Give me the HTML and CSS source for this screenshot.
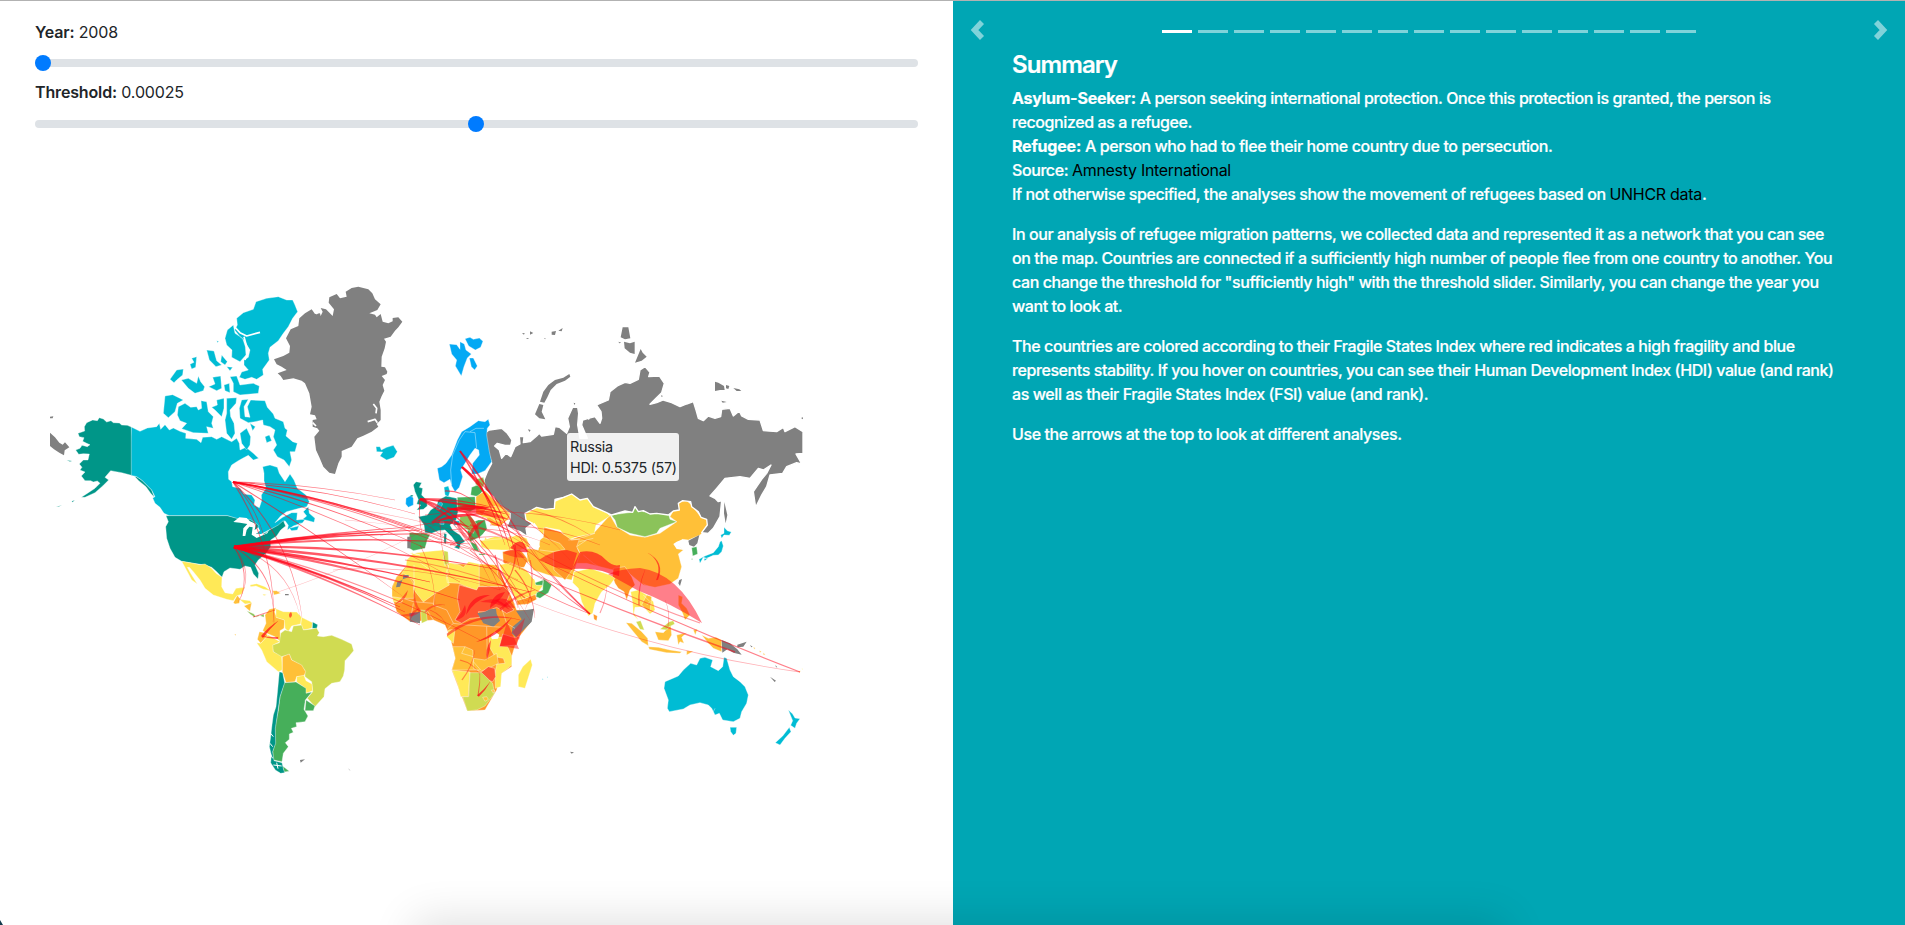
FILE: index.html
```html
<!DOCTYPE html>
<html lang="en">
<head>
<meta charset="utf-8">
<title>Refugee migration</title>
<link rel="stylesheet" href="styles.css">
</head>
<body>
<div class="page">
<section class="left">
  <div class="controls">
    <div class="label"><b>Year:</b> 2008</div>
    <div class="range"><i class="thumb first"></i></div>
    <div class="label second"><b>Threshold:</b> 0.00025</div>
    <div class="range"><i class="thumb"></i></div>
  </div>
  <svg class="map" viewBox="0 145 953 780">
    <!-- northern America -->
    <g transform="translate(40 270) scale(.33333)">
      <path class="n" d="M30 488L45 502L58 518L68 524L75 517L88 532L74 541L72 556L58 548L42 538L30 528ZM30 440L40 439L38 445L30 445Z"/>
      <path class="t" d="M274 471L262 466L245 465L238 459L220 458L213 452L200 456L190 447L178 443L172 452L158 450L140 458L133 470L134 483L114 490L118 500L132 503L128 514L140 520L150 524L142 530L126 526L120 535L107 540L116 553L130 551L148 552L144 570L130 570L118 582L126 592L120 600L135 606L124 618L135 632L152 632L160 636L172 633L180 640L165 655L145 668L124 682L135 682L165 668L188 648L206 630L195 622L212 602L228 605L245 608L274 616L290 620L305 630L320 645L335 660L343 682L332 670L318 650L296 632L285 620ZM80 570L96 573L90 575ZM95 694L105 690L98 697ZM48 710L66 706L56 710Z"/>
      <path class="c" d="M274 471L300 484L322 474L350 470L358 460L362 478L375 464L388 480L400 474L420 484L438 490L437 505L470 508L483 518L488 502L515 500L530 508L545 500L560 508L575 515L590 505L598 520L600 540L618 532L640 550L656 565L640 570L625 556L608 565L595 572L575 585L565 605L566 628L575 635L578 650L600 655L612 672L635 675L645 690L642 705L658 713L665 692L664 675L678 655L672 632L672 610L668 590L690 585L712 592L718 610L735 635L750 612L762 630L772 655L798 675L808 695L800 710L778 715L740 725L722 738L705 758L728 742L755 728L772 728L770 750L790 748L800 742L788 758L760 768L742 780L745 766L735 752L715 768L687 780L668 790L655 798L645 780L640 764L620 760L590 746L562 737H388L372 730L360 712L345 700L338 684L345 680L335 660L320 645L305 630L290 620L274 616Z"/>
      <path class="c" d="M590 145L610 128L640 118L648 95L680 85L715 80L740 90L758 90L765 105L773 125L758 145L745 170L730 190L715 212L690 232L685 250L688 270L668 298L670 315L650 328L635 322L615 328L598 322L605 306L625 300L612 285L612 270L625 262L630 240L612 210L600 200L584 180L592 165ZM580 165L585 190L608 205L616 230L618 255L600 275L575 262L576 240L560 225L555 205L562 180ZM580 340L570 320L590 318L600 345L640 340L658 348L655 370L600 375L580 365ZM500 240L522 243L530 272L545 285L528 290L508 270ZM545 255L562 275L555 285L542 275ZM455 265L470 260L467 292L455 297L450 283L462 277ZM390 328L410 300L430 297L428 315L410 330L402 338ZM424 330L445 325L470 340L475 318L482 335L494 350L490 362L465 370L445 355ZM518 322L542 318L545 355L530 362L506 350L525 342ZM552 345L568 340L570 368L555 362ZM560 290L578 292L570 302ZM530 212L536 214L533 218Z"/>
      <path class="c" d="M375 378L398 374L430 390L412 400L405 425L385 443L370 430ZM415 410L435 400L452 412L470 410L475 420L485 415L483 392L500 395L505 425L520 440L515 460L520 475L500 470L505 490L460 488L425 476L440 460L420 452L412 435ZM530 390L552 385L552 415L545 440L525 420L515 412L532 405ZM560 385L590 383L588 400L570 420L572 440L582 460L585 490L575 508L560 490L555 450L560 430ZM605 390L625 388L612 410L615 440L630 442L622 410L632 390L675 392L682 412L700 432L705 445L730 455L735 475L742 480L738 498L758 515L772 520L765 545L750 545L755 570L748 590L732 570L712 560L700 540L710 525L700 500L705 480L690 470L670 465L668 450L645 455L625 458L600 445L598 415ZM600 490L620 475L632 500L630 525L620 540L605 520ZM675 500L688 495L695 512L680 518ZM630 460L646 470L638 482Z"/>
      <path class="fjord" d="M583 170L600 188L620 198L660 187M612 200L620 230L626 240L615 270"/>
    </g>
    <!-- Greenland, Iceland and Svalbard -->
    <g transform="translate(260 270) scale(.33333)">
      <path class="n" d="M257 65L275 54L295 50L325 58L337 70L345 88L362 103L352 120L328 130L345 134L350 142L362 132L368 155L385 160L398 154L398 144L415 142L427 155L415 172L405 182L392 200L372 206L378 215L374 235L365 260L364 290L375 292L382 305L380 312L365 318L375 330L368 345L373 362L365 378L358 395L362 420L362 450L350 462L355 470L335 485L310 497L292 505L275 530L245 543L245 560L235 580L225 612L208 608L190 590L178 562L168 540L163 500L178 482L172 475L158 470L158 450L170 448L165 436L150 433L155 410L148 370L135 340L125 332L100 325L70 330L62 318L53 310L80 300L65 290L50 283L42 268L70 258L88 248L90 228L78 205L92 178L115 168L118 145L135 130L155 118L165 132L180 130L182 138L188 125L182 114L198 118L218 138L222 118L206 98L208 82L230 72L240 85L260 80Z"/>
      <path class="fjord" d="M323 455L345 448L352 458M340 402L350 415L348 430M158 458L168 468M200 100L218 122M165 125L172 132"/>
      <path class="c" d="M348 530L360 530L364 540L380 532L400 526L412 545L402 562L380 570L360 558L368 546L350 545Z"/>
      <path class="b" d="M568 222L590 224L600 238V215L613 222L618 240L634 252L622 264L612 290L604 318L598 308L586 288L590 270L575 252ZM615 206L630 202L640 208L658 204L669 214L662 232L646 240L626 228ZM628 264L640 264L652 288L644 300L634 290Z"/>
    </g>
    <!-- central and southern America -->
    <g transform="translate(150 480) scale(.33333)">
      <path class="t" d="M48 107H232L256 114L282 120L300 118L325 135L322 160L335 165L358 150L385 135L400 122L407 138L392 150L380 168L362 180L362 200L350 218L325 240L315 255L326 280L324 297L310 282L302 262L285 258L270 268L240 264L222 275L216 292L200 275L185 262L165 255L130 250L95 244L75 232L60 205L50 175L47 140L55 125Z"/>
      <path class="water" d="M250 126L268 112L290 114L300 124L318 132L314 150L325 142L330 152L318 162L345 162L357 150L352 160L320 174L305 164L308 142L298 140L290 150L286 168L278 168L280 145L292 132L270 128Z"/>
      <path class="c" d="M418 145L445 138L450 128L442 150L425 152ZM460 95L475 80L478 100L495 115L492 127L475 122L458 118L470 108Z"/>
      <path class="y" d="M95 244L130 250L150 254L165 252L185 265L198 280L216 292L215 320L225 338L248 342L258 325L284 322L276 342L260 348L250 362L230 358L190 345L165 325L150 300L130 275L118 262L112 262L122 280L142 312L125 300L112 275ZM268 358L300 362L306 370L285 372ZM300 315L320 311L345 320L362 332L340 328L318 318L302 320ZM338 342L350 344L342 347ZM336 300L340 308Z"/>
      <path class="a" d="M250 368L262 346L270 356L268 370L255 372ZM282 378L305 368L300 394ZM368 332L380 332L392 340L372 345ZM254 462L258 462L256 468Z"/>
      <path class="s" d="M290 392L312 402L318 412L342 402L342 412L325 406L314 412L300 402Z"/>
      <path class="n" d="M405 342H416V346H405ZM450 840L465 838L452 848ZM594 865L602 872L598 870Z"/>
      <path class="a" d="M345 405L358 388L378 383L374 396L380 412L405 420L402 445L390 452L392 485L375 470L350 460L338 452L348 430ZM328 455L345 458L354 466L332 490L322 478Z"/>
      <path class="y" d="M378 386L400 395L440 396L455 412L452 432L425 438L415 455L405 445L403 420L378 412ZM455 412L488 428L485 445L460 450L452 432ZM320 488L332 490L355 465L390 485L370 495L370 515L395 525L397 570L385 575L350 545L335 510Z"/>
      <path class="t" d="M488 426L503 434L500 446L487 445Z"/>
      <path class="l" d="M392 460L405 450L425 455L430 438L455 435L460 450L485 447L500 444L508 458L502 468L520 470L545 466L575 478L605 492L611 512L598 528L585 542L584 570L580 588L570 605L545 610L525 626L522 650L495 680L472 655L488 635L485 605L465 590L464 570L445 552L425 540L418 524L395 530L370 515L368 495L388 488Z"/>
      <path class="a" d="M397 530L418 522L425 540L455 555L467 575L462 588L440 590L435 605L408 608L397 575Z"/>
      <path class="y" d="M440 590L462 586L468 602L486 612L488 632L468 640L460 620L440 606Z"/>
      <path class="g" d="M403 608L438 606L468 625L468 640L486 636L466 660L462 688L474 708L465 725L438 728L440 740L424 745L430 757L418 762L418 778L406 788L415 800L400 820L396 845L370 840L368 815L375 790L375 740L385 690L390 650ZM468 660L495 678L490 692L465 692ZM398 858L418 874L402 876Z"/>
      <path class="t" d="M388 575L398 578L404 608L390 650L383 700L376 745L377 790L368 815L372 842L396 848L400 866L404 878L392 880L376 870L362 848L364 825L358 800L362 770L366 735L370 705L378 680L382 640Z"/>
      <path class="fjord thin" d="M362 760L370 770M360 790L368 800M360 820L368 835M370 855L395 858M380 848L384 866"/>
    </g>
    <!-- Africa and Arabia -->
    <g transform="translate(370 530) scale(.33333)">
      <path class="o" d="M68 205L66 170L80 140L105 112L140 90L220 60L238 100L328 105H380L420 190L440 240L490 240L480 280L440 330L425 380V410L395 430L380 480L345 540L292 543L245 420L256 385L240 320L225 285L190 270L120 275L80 245Z"/>
      <path class="y" d="M108 112L110 90L130 70L165 65L222 60L220 85L236 108L232 140L238 165L198 188L160 216L132 180V155L120 140H100L95 130ZM238 98L268 105L280 112L296 95L328 102V170L320 182L265 160L232 158L228 130ZM68 200L100 205L95 218L70 215ZM150 75L128 68L118 70ZM246 420L300 426L298 455L295 500H272L262 460ZM358 320L395 322L415 355L425 378L425 405L395 430L392 470L376 475L375 430L380 402L405 400L400 385L375 380L358 350ZM236 300L255 298L250 340L230 320ZM482 388L487 405L465 475L445 470L445 435L458 410Z"/>
      <path class="a" d="M328 102L370 104L385 115L382 132L402 170H328ZM80 140L100 130L118 140L130 160L132 205L100 205L66 200L66 172ZM248 350H285L308 360L310 395L332 420H246L256 385ZM310 385L345 390L380 370L385 400L355 415L330 425L310 415Z"/>
      <path class="r" d="M268 165L320 180L325 170H402L420 190L410 215L432 240L410 250L380 232L345 245L325 245L330 262L300 265L275 280L255 270L270 245L262 205ZM332 428L355 410L374 415L377 440L368 455L350 450ZM388 350L398 312L430 322L448 320L440 345Z"/>
      <path class="l" d="M222 62L234 65L236 100L224 106L220 85ZM152 240L168 242L172 272L155 280ZM300 428L335 428L368 460L374 490L345 528L320 540L292 543L278 500H296Z"/>
      <path class="n" d="M78 172L82 155L98 150L100 135H116V142L98 148L90 170ZM118 250L150 245V280L120 275ZM322 250L345 245L360 238L378 236L380 252L390 272L370 290L340 280ZM438 242L470 240L492 236L485 275L460 300L438 322L425 310L428 290L455 268Z"/>
      <path class="a" d="M338 502L350 500L355 508L345 514ZM364 480L374 480L370 490Z"/>
      <path class="c" d="M516 446L520 447L518 450ZM531 440L534 441L532 444Z"/>
      <path class="o" d="M440 210L465 205L496 190L500 208L475 222L442 225ZM398 65L445 55L460 70L475 90L470 110L430 118L400 98Z"/>
      <path class="y" d="M388 105L420 98L460 115L490 135L498 165L520 165L500 192L465 205L440 212L415 165Z"/>
      <path class="g" d="M520 145L545 165L535 188L510 205L498 200L500 188L518 180ZM495 158L520 150L518 166L498 165ZM490 142L496 150Z"/>
      <path class="y" d="M350 15L420 18L440 30L445 48L400 58L355 50L340 35Z"/>
      <path class="water" d="M362 318L375 305L388 314L384 326L366 328ZM470 95L500 140L490 148L462 112Z"/>
      <path class="border" d="M132 180V105M150 98L195 130M195 188L190 225L230 240L250 280L230 300M250 280L290 285L400 292M285 350L275 370L310 380M350 290L352 385M395 235L410 280L435 295M100 205L130 215L190 220M130 220L125 250M170 240L190 270"/>
    </g>
    <!-- southern and eastern Asia, Oceania -->
    <g transform="translate(500 480) scale(.33333)">
      <path class="a" d="M120 180L150 155L205 180L285 155L330 105L350 140L390 165L435 172L480 160L530 125L510 110L535 65L560 62L575 75L603 112L625 118L620 145L600 165L565 180L548 178L530 195L550 210L535 222L545 260L535 295L510 312L465 322L430 315L405 295L370 265L340 270L260 250L230 250L215 300L190 295L145 285L100 270L82 240L80 205L115 210Z"/>
      <path class="y" d="M75 100L110 82L135 88L163 85L165 65L215 42L262 55L280 80L320 98L330 108L288 135L283 160L225 172L205 180L180 150L135 142L130 165L115 150L95 142L100 130L78 120Z"/>
      <path class="s" d="M333 105L395 97L405 80L430 95L470 100L505 100L510 118L530 125L480 145L470 160L435 170L390 160L352 142L345 120Z"/>
      <path class="o" d="M132 142L180 155L215 180L238 178L230 200L240 220L230 250L195 300L162 270L160 215L195 208L180 190L130 172ZM340 265L375 260L395 290L405 315L390 330L380 360L372 335L355 325L345 310L338 290ZM280 402L292 408L290 422L282 418Z"/>
      <path class="y" d="M222 275L240 272L270 265L330 285L345 295L330 315L305 335L285 370L278 400L265 408L245 365L235 325L218 308ZM392 335L415 330L440 345L460 365L465 390L450 402L430 380L405 382L402 400L415 420L400 405L398 370Z"/>
      <path class="a" d="M378 428L395 430L425 455L443 475L445 497L425 485L400 455ZM465 455L490 458L512 435L515 465L505 482L475 480ZM445 500L475 502L510 510L545 515L540 520L500 518L448 508ZM530 465L560 458L545 472L552 490L540 485L535 495ZM605 465L625 475L648 472L665 480V515L640 505L625 490ZM535 345L548 350L545 370L560 385L570 405L555 420L548 400L535 375ZM440 345L455 350L450 395L435 385L425 375ZM560 512L580 514L560 525ZM580 450L592 448L586 465Z"/>
      <path class="l" d="M408 425L422 422L433 450L420 448ZM480 448L508 425L520 422L524 432L508 440L500 450Z"/>
      <path class="n" d="M565 182L598 165L592 190L582 200L568 195ZM538 300L546 297L540 318L535 310ZM665 480L690 490L712 508L725 524L700 518L682 508L667 518ZM712 494L740 485L730 500L712 502ZM750 495L758 500L754 502ZM810 590L828 602L824 606ZM826 555L832 562L828 562ZM210 815L222 817L215 821ZM673 66L682 105L677 130L672 100Z"/>
      <path class="g" d="M575 203L590 200L593 222L578 228ZM574 236L579 236L576 240Z"/>
      <path class="c" d="M672 142L682 152L694 156L688 166L672 165L665 175L662 165L672 160ZM665 182L670 198L665 215L655 225L640 226L620 235L610 232L600 250L597 238L615 228L640 218L655 200L660 185ZM612 236L625 234L614 242Z"/>
      <path class="c" d="M495 605L535 588L550 570L572 550L590 555L600 535L615 532L638 540L632 560L655 572L668 560L672 532L680 535L690 570L700 590L720 605L735 620L745 645L740 670L725 695L720 715L700 725L668 720L658 700L645 705L635 685L625 675L600 668L570 675L550 687L508 695L502 685L505 660L492 625ZM690 742L710 742L708 760L700 766L692 755ZM865 690L878 702L885 714L900 716L890 730L885 745L872 736L878 722ZM868 742L873 755L855 775L840 795L826 788L848 768Z"/>
      <path class="y" d="M895 574L902 572L898 578ZM905 566H908V569Z"/>
      <path class="a" d="M760 502L766 504L763 508ZM778 512L784 514L780 518ZM790 518L796 524L790 524Z"/>
      <path class="border" d="M205 180L232 178L285 160M230 200L260 180M238 185L280 175M160 215L120 210M240 220L232 205M250 225L280 250L330 280M395 330L430 312L460 325M430 345L450 365L440 375M640 695L645 685"/>
      <path class="water" d="M103 128L88 145L95 165L92 195L112 208L120 200L112 178L108 165L120 160L112 140Z"/>
      <path class="water" d="M520 192L530 185L548 178L550 185L535 198L552 210L530 207Z"/>
    </g>
    <!-- Russia and its islands -->
    <g transform="translate(500 310) scale(.33333)">
      <path class="n hover" d="M-32 360L5 355L22 370L36 390L32 406L15 406L-8 400L-16 408L-2 420L5 445L18 430L32 440L45 410L60 402L58 380L72 380L70 398L90 395L110 378L118 370L125 378L160 373L165 350L178 352L200 370L208 350L203 325L218 292L233 292L236 310L233 345L240 385L262 385L245 345L248 330L265 325L285 320L300 340L305 325L303 305L290 285L325 270L330 245L352 228L375 217L390 220L415 208L420 180L435 170L450 187L446 200L478 198L493 220L485 248L468 265L450 283L470 278L490 270L515 278L540 290L560 282L580 275L588 300L595 325L610 332L625 318L645 325L662 320L665 298L690 295L700 318L718 303L725 318L745 328L780 330L790 362L830 365L850 352L855 365L885 350L909 365V430L888 432L905 462L890 458L860 470L848 490L810 495L800 530L785 555L767 592L760 545L785 508L800 490L813 465L790 480L775 475L750 505L720 500L675 505L650 535L630 558L645 565L655 575L665 572L660 620L640 655L625 670L605 668L622 645L620 628L603 622L595 605L575 590L572 575L548 572L535 580L538 600L520 603L505 615L470 610L450 612L430 602L415 605L405 590L398 607L375 603L335 615L320 608L280 590L262 565L240 570L215 552L190 562L165 568L163 595L135 598L110 592L95 600L75 610L78 630L98 640L78 655L82 680L60 665L20 650L30 628L30 610L5 600L-10 580L-20 560L-45 540L-48 510L-38 485L-25 460L-35 430L-40 400L-48 370Z"/>
      <path class="n" d="M208 192L211 200L195 212L170 222L152 240L142 262L133 278L120 275L130 245L145 225L165 210L190 203ZM118 282L130 285L125 305L136 328L118 325L105 313ZM368 52L385 52L391 85L375 88L362 82ZM372 95L390 100L404 95L404 132L390 128L374 115ZM355 95L364 98L358 100ZM422 117L428 128L440 140L425 152L405 158ZM645 215L655 218L672 228L674 240L660 240L645 243ZM678 225L688 228L685 237L678 235ZM700 234L718 238L724 243L710 243ZM664 272L680 276L668 278ZM903 324L909 322V328ZM66 70L74 69L72 74ZM90 64L100 69L90 74ZM78 84L88 84L82 87ZM155 65L168 63L165 75L155 74ZM175 62L188 54L185 64ZM132 84H136V88ZM221 278L226 280L223 285ZM84 358L92 360L88 366ZM483 256L489 258L485 261Z"/>
      <path class="fjord" d="M250 300L258 318L268 328M268 300L285 310L298 330"/>
    </g>
    <!-- Europe -->
    <g transform="translate(370 400) scale(.33333)">
      <path class="b" d="M202 205L215 200L228 190L245 165L262 120L275 95L300 80L325 62L345 65L355 58L360 75L352 85L350 105L358 155L365 185L345 212L322 222L305 222L308 190L328 165L326 150L315 145L300 165L285 190L272 210L278 230L268 262L255 275L245 258L240 238L222 248L208 240ZM108 295L125 285L130 295L130 315L115 322L107 312Z"/>
      <path class="border" d="M245 255L242 210L248 165L268 120L285 95L315 98L320 145M300 95L318 85L342 85"/>
      <path class="t" d="M138 245L155 248L148 262L158 265L155 285L170 300L172 318L160 328L140 330L152 315L140 312L145 298L135 275L130 255ZM120 285L130 285L126 292ZM145 350L172 345L182 330L200 318L205 300L228 288L260 295L264 335L258 362L240 375L248 390L270 405L285 425L272 432L268 448L252 442L262 435L245 410L225 390L205 392L185 400L165 398L162 375ZM222 400L230 402L228 432L222 428Z"/>
      <path class="c" d="M222 262L235 258L240 275L235 290L225 285ZM198 320L212 305L218 312L208 330L200 328ZM250 362H275L270 375L252 376ZM210 366H222V373H210Z"/>
      <path class="g" d="M118 398L165 400L180 405L172 420L165 445L130 452L118 445ZM262 292L315 290L318 325L300 335L262 325ZM305 262L335 250L340 270L325 290L302 285ZM325 360L345 360L352 390L330 410L300 425L292 395L300 370Z"/>
      <path class="s" d="M318 238L340 232L345 250L335 265L316 252ZM270 350L300 345L320 372L310 400L285 385L268 370Z"/>
      <path class="n" d="M112 410L124 410L122 445L112 445Z"/>
      <path class="y" d="M330 422L372 418L415 415L440 405L470 415L480 440L450 450L395 450L350 448L335 440Z"/>
      <path class="a" d="M318 290L345 272L368 295L420 340L418 355L400 370L385 385L365 375L350 355L318 340Z"/>
      <path class="y" d="M350 325L378 318L420 340L400 365L375 362L360 352L335 352Z"/>
      <path class="water" d="M340 400L360 375L395 380L425 400L415 415L375 410L350 418Z"/>
      <path class="g" d="M300 425L318 432L328 455L312 450ZM326 461H345V465H328Z"/>
    </g>
    <g class="edges" id="edges"></g>
  </svg>
  <div class="tip">Russia<br>HDI: 0.5375 (57)</div>
</section>
<section class="right">
  <svg class="arrow prev" viewBox="0 0 16 20"><path d="M12 2L4.500 10L12 18"/></svg>
  <div class="dots"><i class="on"></i><i></i><i></i><i></i><i></i><i></i><i></i><i></i><i></i><i></i><i></i><i></i><i></i><i></i><i></i></div>
  <svg class="arrow next" viewBox="0 0 16 20"><path d="M4 2L11.500 10L4 18"/></svg>
  <div class="copy">
    <h4>Summary</h4>
    <p><b>Asylum-Seeker:</b> A person seeking international protection. Once this protection is granted, the person is<br>recognized as a refugee.<br><b>Refugee:</b> A person who had to flee their home country due to persecution.<br>Source: <a>Amnesty International</a><br>If not otherwise specified, the analyses show the movement of refugees based on <a>UNHCR data</a>.</p>
    <p>In our analysis of refugee migration patterns, we collected data and represented it as a network that you can see<br>on the map. Countries are connected if a sufficiently high number of people flee from one country to another. You<br>can change the threshold for "sufficiently high" with the threshold slider. Similarly, you can change the year you<br>want to look at.</p>
    <p>The countries are colored according to their Fragile States Index where red indicates a high fragility and blue<br>represents stability. If you hover on countries, you can see their Human Development Index (HDI) value (and rank)<br>as well as their Fragile States Index (FSI) value (and rank).</p>
    <p>Use the arrows at the top to look at different analyses.</p>
  </div>
</section>
<div class="shade"></div>
<div class="corner"></div>
</div>
<script src="script.js"></script>
</body>
</html>
```
FILE: styles.css
```css
* { box-sizing: border-box; }
body { margin: 0; font: 16px/24px Inter, "Liberation Sans", sans-serif; color: #212529; }
.page { position: relative; display: flex; width: 1905px; height: 925px; overflow: hidden; border-top: 1px solid #b2b2b2; }
.left { position: relative; width: 953px; background: #fff; }
.controls { height: 144px; padding: 19px 35px 0; }
.label { height: 25px; letter-spacing: -.15px; }
.label.second { margin-top: 13px; }
.label b { font-weight: 600; }
.range { display: flex; align-items: center; justify-content: center; width: 883px; height: 8px; margin-top: 14px; padding-right: 2px; border-radius: 4px; background: #dee2e6; }
.label.second + .range { margin-top: 15px; }
.thumb { width: 16px; height: 16px; border-radius: 50%; background: #007bff; }
.thumb.first { margin-right: auto; }
.map { display: block; width: 953px; height: 780px; }
.map path { stroke: rgba(255,255,255,.55); stroke-width: 2; stroke-linejoin: round; }
.map .n { fill: #808080; stroke: none; }
.map .hover { stroke: #fff; stroke-width: 4; }
.map .c { fill: #00bcd4; }
.map .b { fill: #03a9f4; }
.map .t { fill: #009688; }
.map .g { fill: #46af5a; }
.map .s { fill: #8bc35a; }
.map .l { fill: #d0db52; }
.map .y { fill: #ffe957; }
.map .a { fill: #ffc038; }
.map .o { fill: #ff9828; }
.map .r { fill: #ff5730; }
.map .water { fill: #fff; stroke: none; }
.map .fjord { fill: none; stroke: #fff; stroke-width: 5; }
.map .thin { stroke-width: 3; }
.map .border { fill: none; stroke: rgba(255,255,255,.6); stroke-width: 2; }
.map .edges path { fill: #ff0015; stroke: none; }
.tip { position: absolute; left: 567px; top: 432px; width: 112px; height: 48px; padding: 3px 3px; border-radius: 3px; background: rgba(255,255,255,.89); font-size: 14.4px; line-height: 21px; letter-spacing: -.3px; white-space: nowrap; }
.right { flex: 1; display: grid; grid-template-columns: 59px 1fr 51px; grid-template-rows: 48px 1fr; background: #00a6b4; color: #fff; }
.arrow { width: 16px; height: 20px; margin-top: 19px; }
.arrow path { fill: none; stroke: #fff; stroke-opacity: .5; stroke-width: 5.5; }
.prev { margin-left: 17px; }
.next { justify-self: end; margin-right: 17px; }
.dots { display: flex; gap: 6px; justify-content: center; padding: 29px 9px 0 0; }
.dots i { width: 30px; height: 3px; background: rgba(255,255,255,.5); }
.dots i.on { background: #fff; }
.copy { grid-column: 2 / 4; font-weight: 500; letter-spacing: -.41px; white-space: nowrap; -webkit-text-stroke: .2px currentColor; }
.copy h4 { margin: 0 0 6px; font-size: 24px; line-height: 31px; font-weight: 600; letter-spacing: -.9px; }
.copy p { margin: 0 0 16px; }
.copy b { font-weight: 700; letter-spacing: -.2px; }
.copy a { color: #000; font-weight: 400; letter-spacing: -.3px; -webkit-text-stroke: 0; }
.shade { position: absolute; left: 430px; top: 934px; width: 1060px; height: 50px; box-shadow: 0 0 44px 16px rgba(0,0,0,.12); }
.corner { position: absolute; left: 0; bottom: 0; width: 3px; height: 5px; background: #123a4c; clip-path: polygon(0 0, 100% 100%, 0 100%); }
```
FILE: script.js
```js
// Edge: x1, y1, x2, y2, bend, width, opacity
const edges = [
  // Hudson Bay node
  [233,482,415,514,-7,1.6,.6],[233,482,440,540,-8,2,.7],[233,482,455,545,-10,2,.6],[233,482,395,500,-5,1.5,.5],
  [233,482,425,548,-7,1.8,.6],[233,482,460,582,-9,1.5,.5],[233,482,500,560,-12,2,.55],[233,482,405,598,-3,1.6,.6],
  [233,482,274,624,-16,1.8,.5],[233,482,302,617,-19,1.8,.5],[233,482,518,580,-16,1.6,.5],[233,482,265,540,-6,1.5,.5],
  // United States node
  [234,547,420,530,-4,4,.75],[234,547,445,534,-6,3.5,.7],[234,547,470,544,-8,3,.6],[234,547,410,527,-3,2.5,.6],
  [234,547,430,582,-4,4.5,.75],[234,547,530,592,-10,4,.65],[234,547,460,600,-7,4,.6],[234,547,400,607,-5,3.5,.7],
  [234,547,405,612,-6,3.5,.6],[234,547,500,570,-10,3.5,.65],[234,547,420,625,-7,3,.55],[234,547,480,640,-12,2,.45],
  [234,547,240,600,-10,1.8,.5],[234,547,273,622,-19,1.8,.5],[234,547,300,616,-20,1.6,.4],[234,547,238,602,-14,1.4,.4],
  [278,592,470,505,8,.8,.25],[278,638,262,636,-1,3,.6],
  // across Europe
  [420,499,510,515,-3,5,.75],[420,499,480,545,-5,4,.65],[420,499,470,530,-6,3.5,.65],[420,499,495,508,-4,3,.6],[420,499,422,535,2,1.5,.6],
  [447,509,510,520,-4,11,.6],[447,510,492,508,-2,9,.75],[447,508,530,545,-8,3,.6],[432,523,480,515,-4,6,.75],[432,523,472,528,-4,5,.65],
  [432,523,455,508,-2,4,.65],[432,523,380,536,2,1.4,.4],[445,491,475,503,-5,2,.6],[460,451,520,570,-12,2.4,.65],[460,451,505,545,-5,2.4,.65],
  [462,467,510,550,-10,3,.65],[462,467,492,508,-5,3.5,.65],[462,467,530,560,-12,2,.55],[455,520,475,545,3,6,.5],[465,512,480,540,-3,8,.6],
  [468,540,485,520,-4,7,.6],[470,525,540,560,-6,3,.45],[480,512,540,560,-11,1.8,.45],[440,520,450,575,4,1.2,.45],[450,520,490,580,-4,1.4,.45],
  [450,530,550,545,-10,1.2,.45],[425,540,560,590,-12,1.2,.4],[405,560,535,600,-8,1.2,.35],[420,545,435,610,-6,1.2,.4],[475,540,520,610,-6,1.5,.5],
  [480,540,525,605,-4,1.5,.5],[465,530,500,590,-4,1.8,.5],[470,550,530,620,-6,1.4,.5],[500,505,570,560,-6,1.2,.5],[425,515,620,530,-14,1.2,.4],
  [530,510,590,535,-4,1.2,.4],[490,525,600,545,-8,1.2,.4],[450,545,510,538,-6,2,.4],[500,570,518,608,-3,2,.5],[495,555,515,605,3,2,.5],
  [340,507,470,535,-4,1,.35],[345,520,460,535,-2,1,.3],[333,570,500,590,-12,1,.35],
  // Middle East and Horn of Africa
  [510,548,528,552,-5,20,.65],[503,553,525,558,-3,14,.4],[515,545,500,590,-8,2.5,.5],[530,560,525,610,-6,2,.4],[515,570,535,618,-6,2,.5],
  [525,598,500,570,-3,2,.5],[500,610,535,590,-4,4,.45],[495,600,515,608,-2,14,.5],[480,602,510,610,-6,8,.5],
  [466,615,490,595,-7,8,.6],[490,608,505,592,-2,11,.6],[476,642,512,617,5,5,.65],[447,635,520,620,-13,4,.5],
  // Africa
  [395,604,408,590,3,5,.5],[420,612,415,588,-4,4,.4],[400,615,420,612,2,6,.4],[410,620,420,608,-3,5,.4],[425,612,445,605,-4,3,.4],
  [478,696,490,682,1,3,.7],[478,696,480,670,1,1.6,.5],[487,660,491,640,-1,6,.6],[462,680,475,650,3,2,.4],[460,660,480,675,-4,2,.4],
  [456,620,465,605,4,8,.5],[430,610,448,630,-5,1.5,.4],
  // Latin America
  [262,637,278,621,-1,4,.7],[291,612,290,618,0,6,.6],[253,617,275,610,0,1.5,.5],
  // southern Asia
  [590,614,510,545,-4,1.5,.55],[590,614,500,500,-10,1.5,.5],[590,614,540,560,-2,2.4,.55],[590,614,420,520,-9,1.2,.5],
  [600,613,607,585,2,1.5,.4],[639,605,645,570,-3,2,.5],[657,580,648,553,9,3,.6],[668,626,665,600,3,1.2,.4],
  [800,672,545,562,-4,1.6,.5],[800,672,525,600,-12,1.2,.3],[735,652,500,560,-3,2.2,.5],[700,623,500,530,-8,1.6,.4]
];
const holder = document.getElementById('edges');
function add(d, opacity) {
  const p = document.createElementNS('http://www.w3.org/2000/svg', 'path');
  p.setAttribute('d', d);
  p.setAttribute('fill-opacity', opacity);
  holder.appendChild(p);
}
edges.forEach(([x1, y1, x2, y2, bend, w, o]) => {
  const len = Math.hypot(x2 - x1, y2 - y1) || 1;
  const nx = -(y2 - y1) / len, ny = (x2 - x1) / len;
  const cx = (x1 + x2) / 2 + nx * bend * 1.4, cy = (y1 + y2) / 2 + ny * bend * 1.4;
  // narrow edges taper from the node; broad ones swell in the middle
  const s = w < 5 ? w * .35 : 0;
  const h = w < 5 ? w * .3 : w / 2;
  const e = w < 5 ? .15 : 0;
  add(`M${x1 + nx * s} ${y1 + ny * s}Q${cx + nx * h} ${cy + ny * h} ${x2 + nx * e} ${y2 + ny * e}L${x2 - nx * e} ${y2 - ny * e}Q${cx - nx * h} ${cy - ny * h} ${x1 - nx * s} ${y1 - ny * s}Z`, o);
});
// wide flows
add('M539 560Q553 550 567 550L577 553L572 570L555 567Z', .55);
add('M572 569L580 552Q596 549 606 560Q613 567 620 565L619 576L608 573Q595 568 572 569Z', .62);
add('M608 574Q620 569 640 568Q678 573 702 623Q670 603 637 590Z', .5);
add('M500 646L507 622L519 649Z', .45);
add('M512 632L525 618L519 640Z', .4);
```
